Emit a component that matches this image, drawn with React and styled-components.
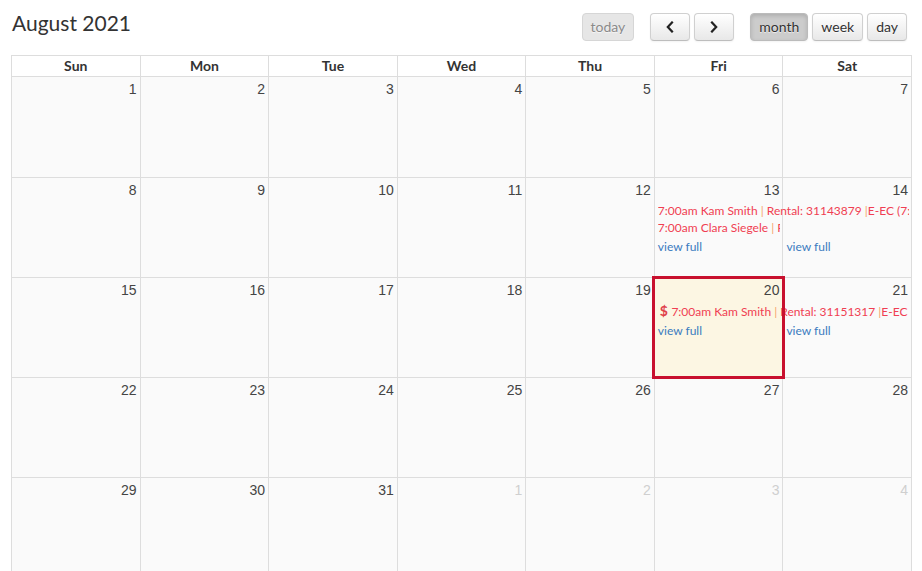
import React from "react";
import styled, { createGlobalStyle, css } from "styled-components";

const GlobalStyle = createGlobalStyle`
  html, body { margin: 0; padding: 0; background: #fff; overflow: hidden; }
  body { font-family: Lato, "Open Sans", Arial, sans-serif; color: #333; }
`;

const Page = styled.div`
  padding: 0 0 0 11px;
  width: 901px;
`;

const Toolbar = styled.div`
  display: flex;
  justify-content: space-between;
  align-items: flex-start;
  height: 55px;
`;

const Title = styled.h2`
  margin: 10px 0 0 1px;
  font-size: 21px;
  line-height: 1.2;
  font-weight: 400;
  color: #333;
`;

const Controls = styled.div`
  display: flex;
  gap: 16px;
  margin-top: 13px;
  margin-right: 5px;
`;

const Group = styled.div`
  display: flex;
  gap: 4px;
`;

const Button = styled.button`
  height: 28px;
  min-width: ${(p) => (p.$icon ? "40px" : "auto")};
  padding: 0 8px 1px;
  box-sizing: border-box;
  display: inline-flex;
  align-items: center;
  justify-content: center;
  font-family: Lato, Arial, sans-serif;
  font-size: 14px;
  color: #333;
  border: 1px solid #d0d0d0;
  border-bottom-color: #bdbdbd;
  border-radius: 4px;
  background: linear-gradient(#ffffff, #e8e8e8);
  box-shadow: inset 0 1px 0 rgba(255, 255, 255, 0.2), 0 1px 2px rgba(0, 0, 0, 0.05);
  text-shadow: 0 1px 1px rgba(255, 255, 255, 0.75);
  cursor: pointer;
  ${(p) =>
    p.$active &&
    css`
      background: #cccccc;
      border-color: #bbb;
      box-shadow: inset 0 2px 4px rgba(0, 0, 0, 0.15), 0 1px 2px rgba(0, 0, 0, 0.05);
    `}
  ${(p) =>
    p.$disabled &&
    css`
      background: #e6e6e6;
      border-color: #d6d6d6;
      color: #8a8a8a;
      box-shadow: none;
    `}
`;

const Table = styled.div`
  border-left: 1px solid #ddd;
  border-top: 1px solid #ddd;
`;

const HeadRow = styled.div`
  display: grid;
  grid-template-columns: repeat(7, 1fr);
`;

const HeadCell = styled.div`
  border-right: 1px solid #ddd;
  border-bottom: 1px solid #ddd;
  height: 20px;
  line-height: 20px;
  text-align: center;
  font-weight: 700;
  font-size: 14px;
  color: #333;
`;

const Week = styled.div`
  display: grid;
  grid-template-columns: repeat(7, 1fr);
  grid-template-rows: 24px auto auto auto 1fr;
  height: ${(p) => (p.$first ? "101px" : "100px")};
`;

const DayBg = styled.div`
  grid-column: ${(p) => p.$col};
  grid-row: 1 / -1;
  border-right: 1px solid #ddd;
  border-bottom: 1px solid #ddd;
  background: ${(p) => (p.$today ? "#fcf6e3" : "#fafafa")};
`;

const Highlight = styled.div`
  grid-column: ${(p) => p.$col};
  grid-row: 1 / -1;
  position: relative;
  z-index: 2;
  margin: -2px -2px -1px -3px;
  border: 3px solid #c8102e;
  pointer-events: none;
`;

const DayNum = styled.div`
  grid-column: ${(p) => p.$col};
  grid-row: 1;
  text-align: right;
  padding: 4px 4px 0 2px;
  line-height: 16px;
  font-family: "Liberation Sans", Arial, sans-serif;
  font-size: 14px;
  color: ${(p) => (p.$other ? "#cfcfcf" : "#444")};
`;

const Event = styled.div`
  grid-column: ${(p) => p.$col} / span ${(p) => p.$span};
  grid-row: ${(p) => p.$row};
  margin: 0 3px 0 3px;
  font-size: 12px;
  line-height: 17px;
  white-space: nowrap;
  overflow: hidden;
  color: #f03e52;
`;

const Pipe = styled.span`
  color: #f7a36b;
`;

const Dollar = styled.span`
  font-weight: 700;
  font-size: 14px;
  color: #e0404a;
  margin-left: 2px;
`;

const ViewFull = styled.a`
  grid-column: ${(p) => p.$col};
  grid-row: ${(p) => p.$row};
  margin-left: ${(p) => (p.$col === 7 ? "3px" : "3px")};
  padding-top: 3px;
  line-height: 16px;
  font-size: 12px;
  color: #3a7bbf;
  text-decoration: none;
  cursor: pointer;
`;

const Chevron = ({ dir }) => (
  <svg width="8" height="12" viewBox="0 0 8 12" fill="none">
    <path
      d={dir === "left" ? "M6 1.5 L1.8 6 L6 10.5" : "M2 1.5 L6.2 6 L2 10.5"}
      stroke="#222"
      strokeWidth="2.2"
      strokeLinecap="square"
      strokeLinejoin="miter"
    />
  </svg>
);

const days = ["Sun", "Mon", "Tue", "Wed", "Thu", "Fri", "Sat"];

const weeks = [
  [1, 2, 3, 4, 5, 6, 7],
  [8, 9, 10, 11, 12, 13, 14],
  [15, 16, 17, 18, 19, 20, 21],
  [22, 23, 24, 25, 26, 27, 28],
  [29, 30, 31, 1, 2, 3, 4],
];

const EventText = ({ dollar, name, id }) => (
  <>
    {dollar && <Dollar>$ </Dollar>}7:00am {name} <Pipe>|</Pipe> Rental: {id} <Pipe>|</Pipe>E-EC (7:00am - 5:00pm)
  </>
);

export default function App() {
  return (
    <>
      <GlobalStyle />
      <Page>
        <Toolbar>
          <Title>August 2021</Title>
          <Controls>
            <Button $disabled>today</Button>
            <Group>
              <Button $icon aria-label="prev">
                <Chevron dir="left" />
              </Button>
              <Button $icon aria-label="next">
                <Chevron dir="right" />
              </Button>
            </Group>
            <Group>
              <Button $active>month</Button>
              <Button>week</Button>
              <Button>day</Button>
            </Group>
          </Controls>
        </Toolbar>
        <Table>
          <HeadRow>
            {days.map((d) => (
              <HeadCell key={d}>{d}</HeadCell>
            ))}
          </HeadRow>
          {weeks.map((w, wi) => (
            <Week key={wi} $first={wi === 0}>
              {w.map((n, i) => (
                <DayBg key={"bg" + i} $col={i + 1} $today={wi === 2 && i === 5} />
              ))}
              {w.map((n, i) => (
                <DayNum key={"n" + i} $col={i + 1} $other={wi === 4 && i >= 3}>
                  {n}
                </DayNum>
              ))}
              {wi === 1 && (
                <>
                  <Event $col={6} $span={2} $row={2}>
                    <EventText name="Kam Smith" id="31143879" />
                  </Event>
                  <Event $col={6} $span={1} $row={3}>
                    <EventText name="Clara Siegele" id="31143880" />
                  </Event>
                  <ViewFull $col={6} $row={4}>view full</ViewFull>
                  <ViewFull $col={7} $row={4}>view full</ViewFull>
                </>
              )}
              {wi === 2 && (
                <>
                  <Event $col={6} $span={2} $row={2}>
                    <EventText dollar name="Kam Smith" id="31151317" />
                  </Event>
                  <ViewFull $col={6} $row={3}>view full</ViewFull>
                  <ViewFull $col={7} $row={3}>view full</ViewFull>
                  <Highlight $col={6} />
                </>
              )}
            </Week>
          ))}
        </Table>
      </Page>
    </>
  );
}
